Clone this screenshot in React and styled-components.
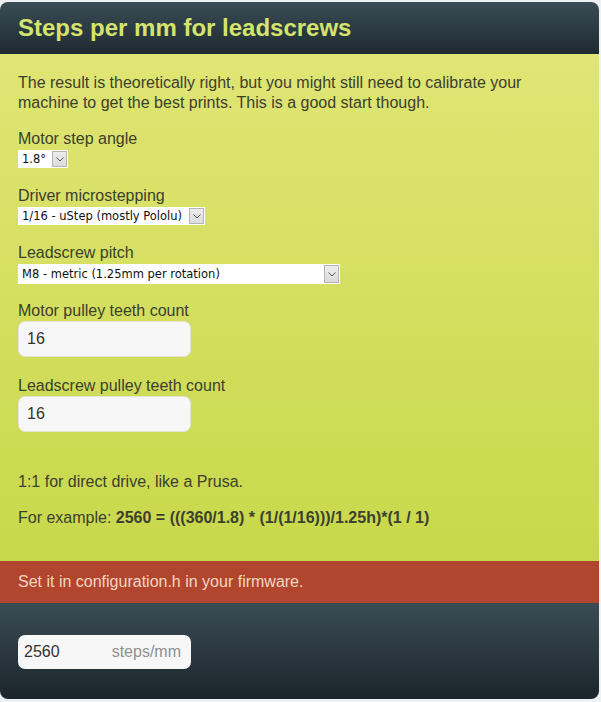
import styled, { createGlobalStyle } from 'styled-components';
import { useState } from 'react';

const Global = createGlobalStyle`
  html, body {
    margin: 0;
    padding: 0;
    background: #eef1f1;
  }
  body {
    font-family: "Liberation Sans", Arial, sans-serif;
  }
`;

const Panel = styled.div`
  margin: 2px 2px 4px 0;
  border-radius: 8px;
  overflow: hidden;
  display: flex;
  flex-direction: column;
`;

const Header = styled.div`
  height: 52px;
  display: flex;
  align-items: center;
  padding: 0 18px;
  background: linear-gradient(#3a4c55, #1e2a30);
`;

const Title = styled.h1`
  margin: 0;
  font-size: 24px;
  font-weight: bold;
  color: #d5e46c;
`;

const Body = styled.div`
  padding: 19px 18px 33px;
  background: linear-gradient(#e0e574, #c8d84a);
  color: #3b402f;
  font-size: 16px;
  line-height: 20px;
`;

const Intro = styled.p`
  margin: 0 0 16px;
`;

const Field = styled.div`
  display: flex;
  flex-direction: column;
  align-items: flex-start;
  margin-bottom: ${({ gap }) => gap ?? 18}px;
`;

const Label = styled.label`
  display: block;
`;

const SelectWrap = styled.div`
  display: flex;
  align-items: center;
  margin-top: 1px;
  width: ${({ w }) => w}px;
  height: ${({ h }) => h || 18}px;
  background: #fff;
  box-sizing: border-box;
`;

const NativeSelect = styled.select`
  appearance: none;
  flex: 1;
  min-width: 0;
  height: 100%;
  border: none;
  background: transparent;
  padding: 0 0 0 4px;
  font-family: "DejaVu Sans", Verdana, sans-serif;
  font-size: 11.5px;
  color: #111;
  outline: none;
`;

const ArrowBox = styled.span`
  width: 15px;
  height: calc(100% - 2px);
  margin-right: 1px;
  border: 1px solid #b4b4b4;
  background: linear-gradient(#ececec, #dcdcdc);
  display: flex;
  align-items: center;
  justify-content: center;
  box-sizing: border-box;
`;

const Chevron = () => (
  <svg width="8" height="5" viewBox="0 0 8 5">
    <path d="M0.5 0.5 L4 4 L7.5 0.5" fill="none" stroke="#555" strokeWidth="1" />
  </svg>
);

const TextBox = styled.input`
  width: 173px;
  height: 36px;
  box-sizing: border-box;
  border: 1px solid #e3e3d8;
  border-radius: 7px;
  background: #f7f7f7;
  padding: 0 8px;
  font-family: "Liberation Sans", Arial, sans-serif;
  font-size: 16px;
  color: #333;
  outline: none;
`;

const Note = styled.p`
  margin: ${({ top }) => top || 0}px 0 0;
`;

const Warning = styled.div`
  height: 42px;
  display: flex;
  align-items: center;
  padding: 0 18px;
  background: #b2452d;
  color: #f5d6c4;
  font-size: 16px;
`;

const Footer = styled.div`
  padding: 32px 18px 30px;
  background: linear-gradient(#3b4c54, #1b252b);
`;

const ResultBox = styled.div`
  width: 173px;
  height: 34px;
  box-sizing: border-box;
  border-radius: 7px;
  background: #f7f7f7;
  display: flex;
  align-items: center;
  justify-content: space-between;
  padding: 0 10px 0 6px;
  font-size: 16px;
`;

const ResultValue = styled.span`
  color: #333;
`;

const Unit = styled.span`
  color: #8f8f8f;
`;

const Dropdown = ({ w, h, value, options, onChange }) => (
  <SelectWrap w={w} h={h}>
    <NativeSelect value={value} onChange={(e) => onChange(e.target.value)}>
      {options.map((o) => (
        <option key={o}>{o}</option>
      ))}
    </NativeSelect>
    <ArrowBox>
      <Chevron />
    </ArrowBox>
  </SelectWrap>
);

export default function App() {
  const [angle, setAngle] = useState('1.8°');
  const [micro, setMicro] = useState('1/16 - uStep (mostly Pololu)');
  const [pitch, setPitch] = useState('M8 - metric (1.25mm per rotation)');
  const [motorTeeth, setMotorTeeth] = useState('16');
  const [screwTeeth, setScrewTeeth] = useState('16');

  return (
    <>
      <Global />
      <Panel>
        <Header>
          <Title>Steps per mm for leadscrews</Title>
        </Header>
        <Body>
          <Intro>
            The result is theoretically right, but you might still need to calibrate your
            machine to get the best prints. This is a good start though.
          </Intro>
          <Field>
            <Label>Motor step angle</Label>
            <Dropdown w={50} value={angle} options={['1.8°', '0.9°', '7.5°']} onChange={setAngle} />
          </Field>
          <Field>
            <Label>Driver microstepping</Label>
            <Dropdown
              w={187}
              value={micro}
              options={['1 - full step', '1/2 - half step', '1/4 - quarter step', '1/8 - uStep', '1/16 - uStep (mostly Pololu)', '1/32 - uStep']}
              onChange={setMicro}
            />
          </Field>
          <Field gap={17}>
            <Label>Leadscrew pitch</Label>
            <Dropdown
              w={322}
              h={20}
              value={pitch}
              options={['M8 - metric (1.25mm per rotation)', 'M5 - metric (0.8mm per rotation)', 'Trapezoidal 8mm']}
              onChange={setPitch}
            />
          </Field>
          <Field gap={19}>
            <Label>Motor pulley teeth count</Label>
            <TextBox value={motorTeeth} onChange={(e) => setMotorTeeth(e.target.value)} />
          </Field>
          <Field gap={0}>
            <Label>Leadscrew pulley teeth count</Label>
            <TextBox value={screwTeeth} onChange={(e) => setScrewTeeth(e.target.value)} />
          </Field>
          <Note top={40}>1:1 for direct drive, like a Prusa.</Note>
          <Note top={16}>
            For example: <b>2560 = (((360/1.8) * (1/(1/16)))/1.25h)*(1 / 1)</b>
          </Note>
        </Body>
        <Warning>Set it in configuration.h in your firmware.</Warning>
        <Footer>
          <ResultBox>
            <ResultValue>2560</ResultValue>
            <Unit>steps/mm</Unit>
          </ResultBox>
        </Footer>
      </Panel>
    </>
  );
}
